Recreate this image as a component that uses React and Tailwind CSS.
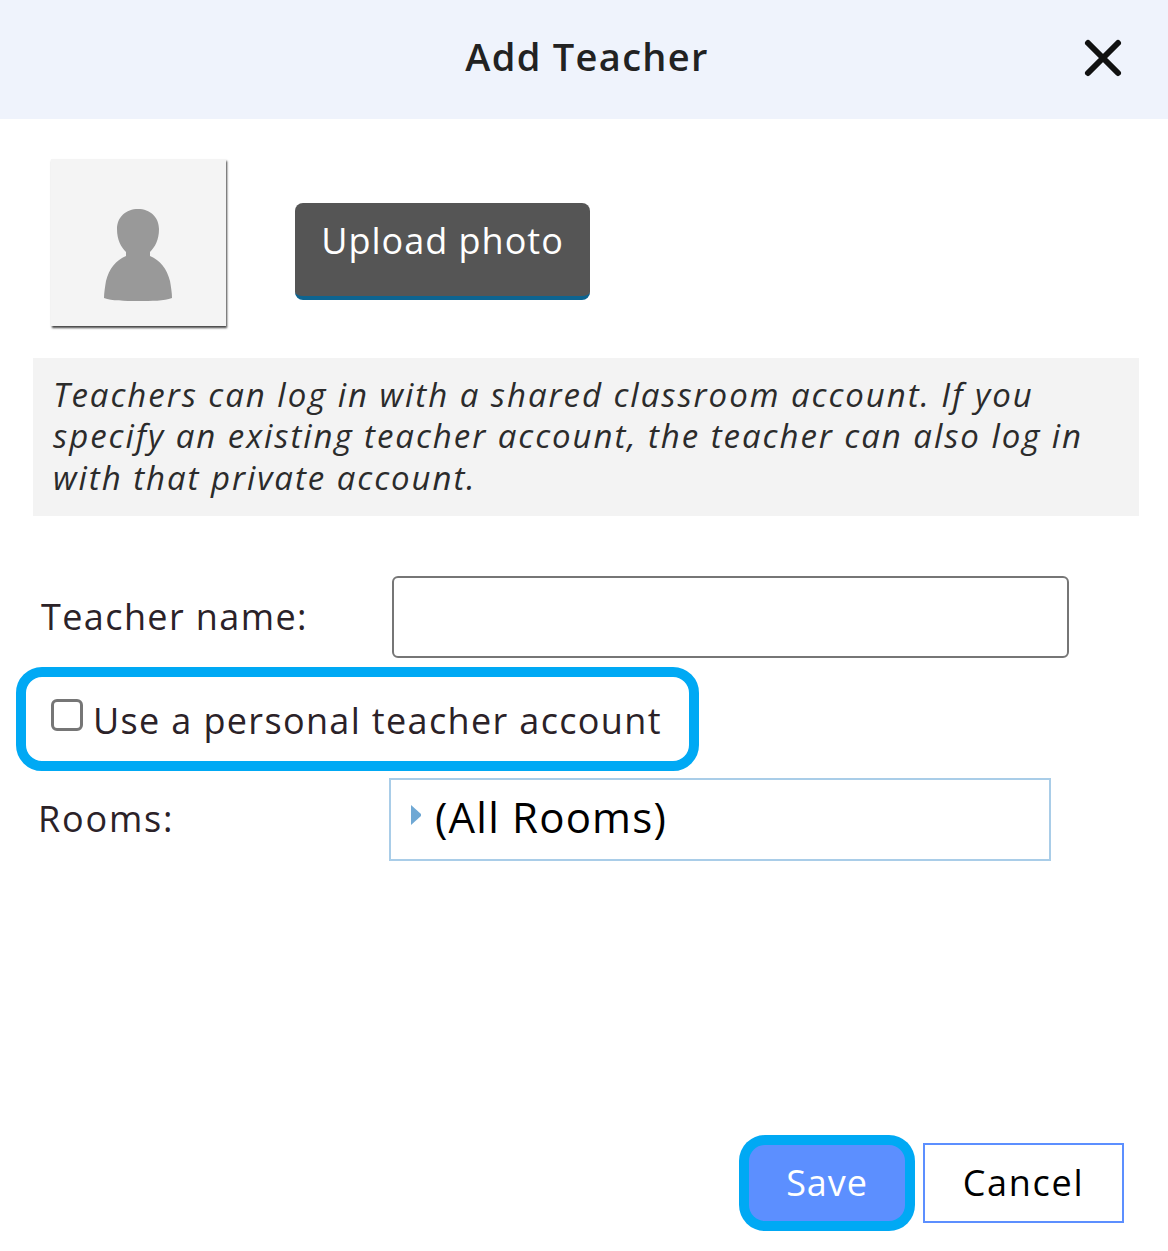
const font = { fontFamily: '"Open Sans", "Noto Sans", sans-serif' };

function Avatar() {
  return (
    <div className="w-[175px] h-[167px] bg-[#f4f4f4] shadow-[1px_2px_2px_#444] flex items-center justify-center shrink-0">
      <svg width="70" height="93" viewBox="0 0 70 93" className="mt-[25px] -ml-[1px]">
        <path
          fill="#999999"
          d="M35 0c12 0 21 8 21 20 0 11-4 18-9 23v4c10 4 17 13 20 25 1 6 2 12 2 17-8 3-20 3-34 3s-26 0-34-3c0-5 1-11 2-17 3-12 10-21 20-25v-4c-5-5-9-12-9-23C14 8 23 0 35 0z"
        />
      </svg>
    </div>
  );
}

export default function App() {
  return (
    <div className="w-[1168px] h-[1251px] bg-white text-[#2b2228] overflow-hidden" style={font}>
      <header className="h-[119px] bg-[#eff3fc] flex items-center relative">
        <h1 className="w-full text-center text-[38px] font-semibold text-[#222] tracking-[1.3px] pb-[6px] pl-[6px]">Add Teacher</h1>
        <svg width="40" height="40" viewBox="0 0 40 40" className="absolute left-[1083px] top-[38px]">
          <path d="M5 5L35 35M35 5L5 35" stroke="#111" strokeWidth="6" strokeLinecap="round" />
        </svg>
      </header>

      <div className="pl-[51px] pt-[40px] flex items-start">
        <Avatar />
        <button className="ml-[69px] mt-[44px] w-[295px] h-[97px] bg-[#555555] border-b-4 border-[#0d6490] rounded-[8px] text-white text-[36px] tracking-[1px] pb-[18px]">
          Upload photo
        </button>
      </div>

      <p className="mt-[32px] ml-[33px] w-[1106px] h-[158px] bg-[#f3f3f3] px-[20px] pt-[15.7px] italic text-[33px] leading-[41.5px] tracking-[1.95px] text-[#2b2b2b]">
        Teachers can log in with a shared classroom account. If you specify an existing teacher account, the teacher can also log in with that private account.
      </p>

      <div className="mt-[60px] ml-[41px] flex items-center">
        <label className="w-[351px] text-[36px] tracking-[1.4px]">Teacher name:</label>
        <input className="w-[677px] h-[82px] border-2 border-[#767676] rounded-[6px] bg-white" />
      </div>

      <div className="mt-[9px] ml-[16px] w-[683px] h-[104px] border-[10px] border-[#00a9f4] rounded-[26px] flex items-center pl-[25px]">
        <span className="w-[32px] h-[32px] border-[3px] border-[#767676] rounded-[6px] bg-white shrink-0 -mt-[8px]" />
        <span className="ml-[10px] pt-[4px] text-[36px] tracking-[1.35px] whitespace-nowrap">Use a personal teacher account</span>
      </div>

      <div className="mt-[7px] ml-[39px] flex items-center">
        <label className="w-[350px] pb-[2px] -ml-[1px] text-[36px] tracking-[1.8px]">Rooms:</label>
        <div className="ml-[1px] w-[662px] h-[83px] border-2 border-[#a9cde8] flex items-center pl-[19px]">
          <svg width="12" height="20" viewBox="0 0 12 20" className="-mt-[10px]">
            <path d="M1 0L11 9V11L1 20Z" fill="#6fa8d4" />
          </svg>
          <span className="ml-[13px] pb-[6px] text-[42px] text-black tracking-[1.2px]">(All Rooms)</span>
        </div>
      </div>

      <div className="mt-[282px] ml-[749px] flex items-center">
        <button className="w-[156px] h-[76px] bg-[#5c8fff] rounded-[16px] ring-[10px] ring-[#00a9f4] text-white text-[36px] tracking-[0.9px]">
          Save
        </button>
        <button className="ml-[18px] w-[201px] h-[80px] border-2 border-[#5c8fff] bg-white text-black text-[36px] tracking-[1.7px]">
          Cancel
        </button>
      </div>
    </div>
  );
}
